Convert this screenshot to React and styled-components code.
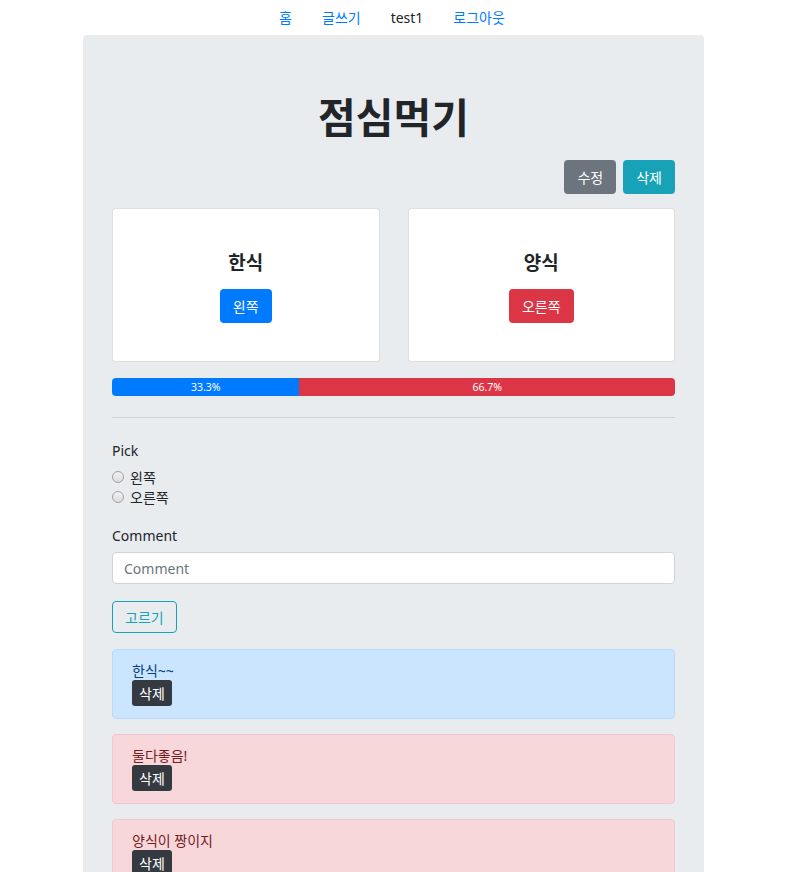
import React from 'react'
import styled, { createGlobalStyle } from 'styled-components';

const GlobalStyle = createGlobalStyle`
  body {
    margin: 0;
    background: #fff;
    font-family: "Noto Sans", "Noto Sans CJK KR", sans-serif;
    font-size: 14px;
    color: #212529;
  }
  * { box-sizing: border-box; }
`;

const comments = [
    { id: 1, text: '한식~~', pick: 'left' },
    { id: 2, text: '둘다좋음!', pick: 'right' },
    { id: 3, text: '양식이 짱이지', pick: 'right' },
];

function App()
{
    const left = 33.3;

    return (
        <>
            <GlobalStyle />
            <Nav>
                <NavLink href="#">홈</NavLink>
                <NavLink href="#">글쓰기</NavLink>
                <NavText>test1</NavText>
                <NavLink href="#">로그아웃</NavLink>
            </Nav>
            <Jumbotron>
                <Title>점심먹기</Title>
                <Actions>
                    <Btn variant="secondary">수정</Btn>
                    <Btn variant="info">삭제</Btn>
                </Actions>
                <Cards>
                    <Card>
                        <CardTitle>한식</CardTitle>
                        <Btn variant="primary">왼쪽</Btn>
                    </Card>
                    <Card>
                        <CardTitle>양식</CardTitle>
                        <Btn variant="danger">오른쪽</Btn>
                    </Card>
                </Cards>
                <Progress>
                    <Bar color="#007bff" style={{ width: left + '%' }}>{left}%</Bar>
                    <Bar color="#dc3545" style={{ width: (100 - left) + '%' }}>{(100 - left).toFixed(1)}%</Bar>
                </Progress>
                <Divider />
                <FormGroup>
                    <Label>Pick</Label>
                    <RadioRow>
                        <Radio type="radio" name="pick" />
                        <span>왼쪽</span>
                    </RadioRow>
                    <RadioRow>
                        <Radio type="radio" name="pick" />
                        <span>오른쪽</span>
                    </RadioRow>
                </FormGroup>
                <FormGroup>
                    <Label>Comment</Label>
                    <Input placeholder="Comment" />
                </FormGroup>
                <OutlineBtn>고르기</OutlineBtn>
                <List>
                    {comments.map(c => (
                        <Alert key={c.id} kind={c.pick}>
                            <AlertText>{c.text}</AlertText>
                            <SmallBtn>삭제</SmallBtn>
                        </Alert>
                    ))}
                </List>
            </Jumbotron>
        </>
    );
}

export default App

const Nav = styled.nav`
    display: flex;
    justify-content: center;
    height: 35px;
    padding-right: 5px;
`;

const NavLink = styled.a`
    padding: 8px 15px;
    line-height: 19px;
    color: #007bff;
    text-decoration: none;
`;

const NavText = styled.span`
    padding: 8px 15px;
    line-height: 19px;
    color: #212529;
`;

const Jumbotron = styled.div`
    width: 621px;
    margin: 0 0 0 calc((100% - 623px) / 2);
    background: #e9ecef;
    border-radius: 4px;
    padding: 57px 29px 64px;
`;

const Title = styled.h1`
    margin: 0;
    text-align: center;
    font-size: 41px;
    line-height: 50px;
    font-weight: 700;
    color: #212529;
`;

const Actions = styled.div`
    display: flex;
    justify-content: flex-end;
    gap: 7px;
    margin-top: 18px;
`;

const colors = {
    primary: '#007bff',
    secondary: '#6c757d',
    info: '#17a2b8',
    danger: '#dc3545',
};

const Btn = styled.button`
    height: 34px;
    padding: 0 13px;
    border: none;
    border-radius: 4px;
    background: ${p => colors[p.variant]};
    color: #fff;
    font-family: inherit;
    font-size: 14px;
`;

const Cards = styled.div`
    display: grid;
    grid-template-columns: 1fr 1fr;
    gap: 28px;
    margin-top: 14px;
`;

const Card = styled.div`
    height: 154px;
    padding-top: 3px;
    background: #fff;
    border: 1px solid rgba(0, 0, 0, 0.125);
    border-radius: 4px;
    display: flex;
    flex-direction: column;
    align-items: center;
    justify-content: center;
    gap: 13px;
`;

const CardTitle = styled.h4`
    margin: 0;
    font-size: 19px;
    line-height: 26px;
    font-weight: 700;
`;

const Progress = styled.div`
    display: flex;
    height: 18px;
    margin-top: 16px;
    border-radius: 4px;
    overflow: hidden;
`;

const Bar = styled.div`
    background: ${p => p.color};
    color: #fff;
    font-size: 10.5px;
    line-height: 18px;
    text-align: center;
`;

const Divider = styled.hr`
    margin: 21px 0 21px;
    border: 0;
    border-top: 1px solid rgba(0, 0, 0, 0.1);
`;

const FormGroup = styled.div`
    margin-bottom: 17px;
`;

const Label = styled.div`
    line-height: 24px;
    margin-bottom: 4px;
    color: #212529;
`;

const RadioRow = styled.label`
    display: flex;
    align-items: center;
    height: 20px;
    gap: 6px;
`;

const Radio = styled.input`
    appearance: none;
    margin: 0;
    width: 12px;
    height: 12px;
    border-radius: 50%;
    border: 1px solid #a0a0a0;
    background: linear-gradient(#f2f2f2, #dcdcdc);
`;

const Input = styled.input`
    display: block;
    width: 100%;
    height: 32px;
    margin-top: 3px;
    padding: 0 11px;
    border: 1px solid #ced4da;
    border-radius: 4px;
    background: #fff;
    font-family: inherit;
    font-size: 14px;
    color: #495057;
    &::placeholder { color: #6c757d; }
`;

const OutlineBtn = styled.button`
    height: 32px;
    padding: 0 12px;
    border: 1px solid #17a2b8;
    border-radius: 4px;
    background: transparent;
    color: #17a2b8;
    font-family: inherit;
    font-size: 14px;
`;

const List = styled.div`
    margin-top: 16px;
`;

const Alert = styled.div`
    padding: 12px 19px;
    margin-bottom: 15px;
    border-radius: 4px;
    border: 1px solid ${p => p.kind === 'left' ? '#b8daff' : '#f5c6cb'};
    background: ${p => p.kind === 'left' ? '#cce5ff' : '#f8d7da'};
    color: ${p => p.kind === 'left' ? '#004085' : '#721c24'};
`;

const AlertText = styled.div`
    line-height: 18px;
`;

const SmallBtn = styled.button`
    display: block;
    height: 26px;
    padding: 0 7px;
    border: none;
    border-radius: 3px;
    background: #343a40;
    color: #fff;
    font-family: inherit;
    font-size: 14px;
`;
